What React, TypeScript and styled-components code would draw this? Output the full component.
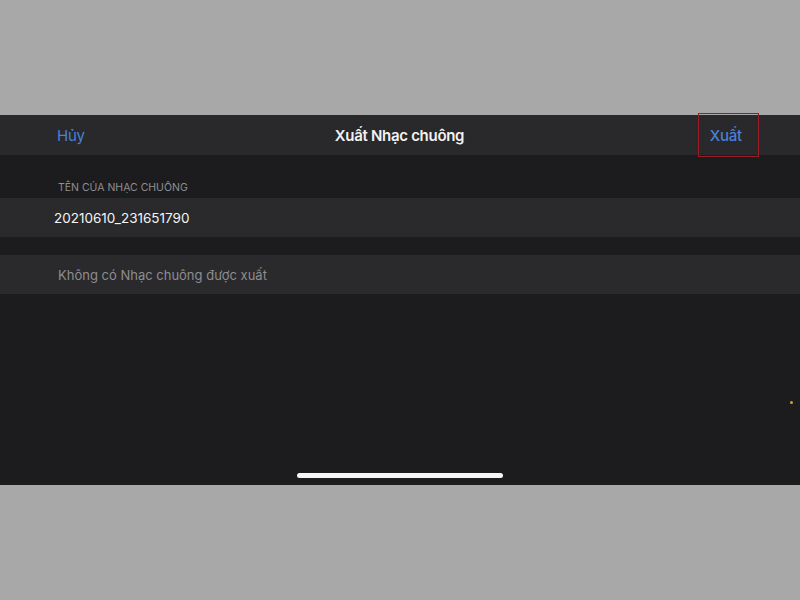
import React from "react";
import styled, { createGlobalStyle } from "styled-components";

const Global = createGlobalStyle`
  html, body { margin: 0; padding: 0; background: #a8a8a8; }
  body { font-family: "Inter", "Noto Sans", "Liberation Sans", sans-serif; }
`;

const Page = styled.div`
  width: 800px;
  height: 600px;
  display: flex;
  flex-direction: column;
  background: #a8a8a8;
`;

const Spacer = styled.div<{ $h: number }>`
  height: ${(p) => p.$h}px;
  flex: none;
`;

const Screen = styled.div`
  position: relative;
  height: 370px;
  background: #1c1c1e;
  display: flex;
  flex-direction: column;
`;

const NavBar = styled.div`
  position: relative;
  height: 40px;
  background: #29292b;
  display: grid;
  grid-template-columns: 1fr auto 1fr;
  align-items: center;
  padding: 0 58px 0 57px;
`;

const NavButton = styled.span<{ $bold?: boolean; $right?: boolean }>`
  color: #4a80d8;
  font-size: 15px;
  font-weight: ${(p) => (p.$bold ? 500 : 400)};
  letter-spacing: -0.2px;
  justify-self: ${(p) => (p.$right ? "end" : "start")};
`;

const Title = styled.span`
  color: #f2f2f2;
  font-size: 15px;
  font-weight: 600;
  letter-spacing: -0.3px;
`;

const Highlight = styled.div`
  position: absolute;
  left: 698px;
  top: -2px;
  width: 61px;
  height: 44px;
  border: 1px solid #9a1d26;
  box-sizing: border-box;
`;

const SectionHeader = styled.div`
  height: 43px;
  display: flex;
  align-items: flex-end;
  padding: 0 0 4px 58px;
  box-sizing: border-box;
  color: #8e8e92;
  font-size: 10.5px;
`;

const Row = styled.div<{ $muted?: boolean; $pad: number; $size: number }>`
  height: 39px;
  background: #2a2a2c;
  display: flex;
  align-items: center;
  padding-left: ${(p) => p.$pad}px;
  color: ${(p) => (p.$muted ? "#8d8d91" : "#f4f4f4")};
  font-size: ${(p) => p.$size}px;
`;

const Gap = styled.div`
  height: 18px;
`;

const HomeIndicator = styled.div`
  position: absolute;
  left: 297px;
  bottom: 7px;
  width: 206px;
  height: 5px;
  border-radius: 3px;
  background: #f5f5f5;
`;

const Dot = styled.div`
  position: absolute;
  left: 790px;
  top: 286px;
  width: 3px;
  height: 3px;
  border-radius: 50%;
  background: #d59a3c;
`;

export default function App() {
  return (
    <>
      <Global />
      <Page>
        <Spacer $h={115} />
        <Screen>
          <NavBar>
            <NavButton>Hủy</NavButton>
            <Title>Xuất Nhạc chuông</Title>
            <NavButton $bold $right>Xuất</NavButton>
            <Highlight />
          </NavBar>
          <SectionHeader>TÊN CỦA NHẠC CHUÔNG</SectionHeader>
          <Row $pad={54} $size={13.5}>20210610_231651790</Row>
          <Gap />
          <Row $pad={58} $size={13} $muted>Không có Nhạc chuông được xuất</Row>
          <HomeIndicator />
          <Dot />
        </Screen>
      </Page>
    </>
  );
}
